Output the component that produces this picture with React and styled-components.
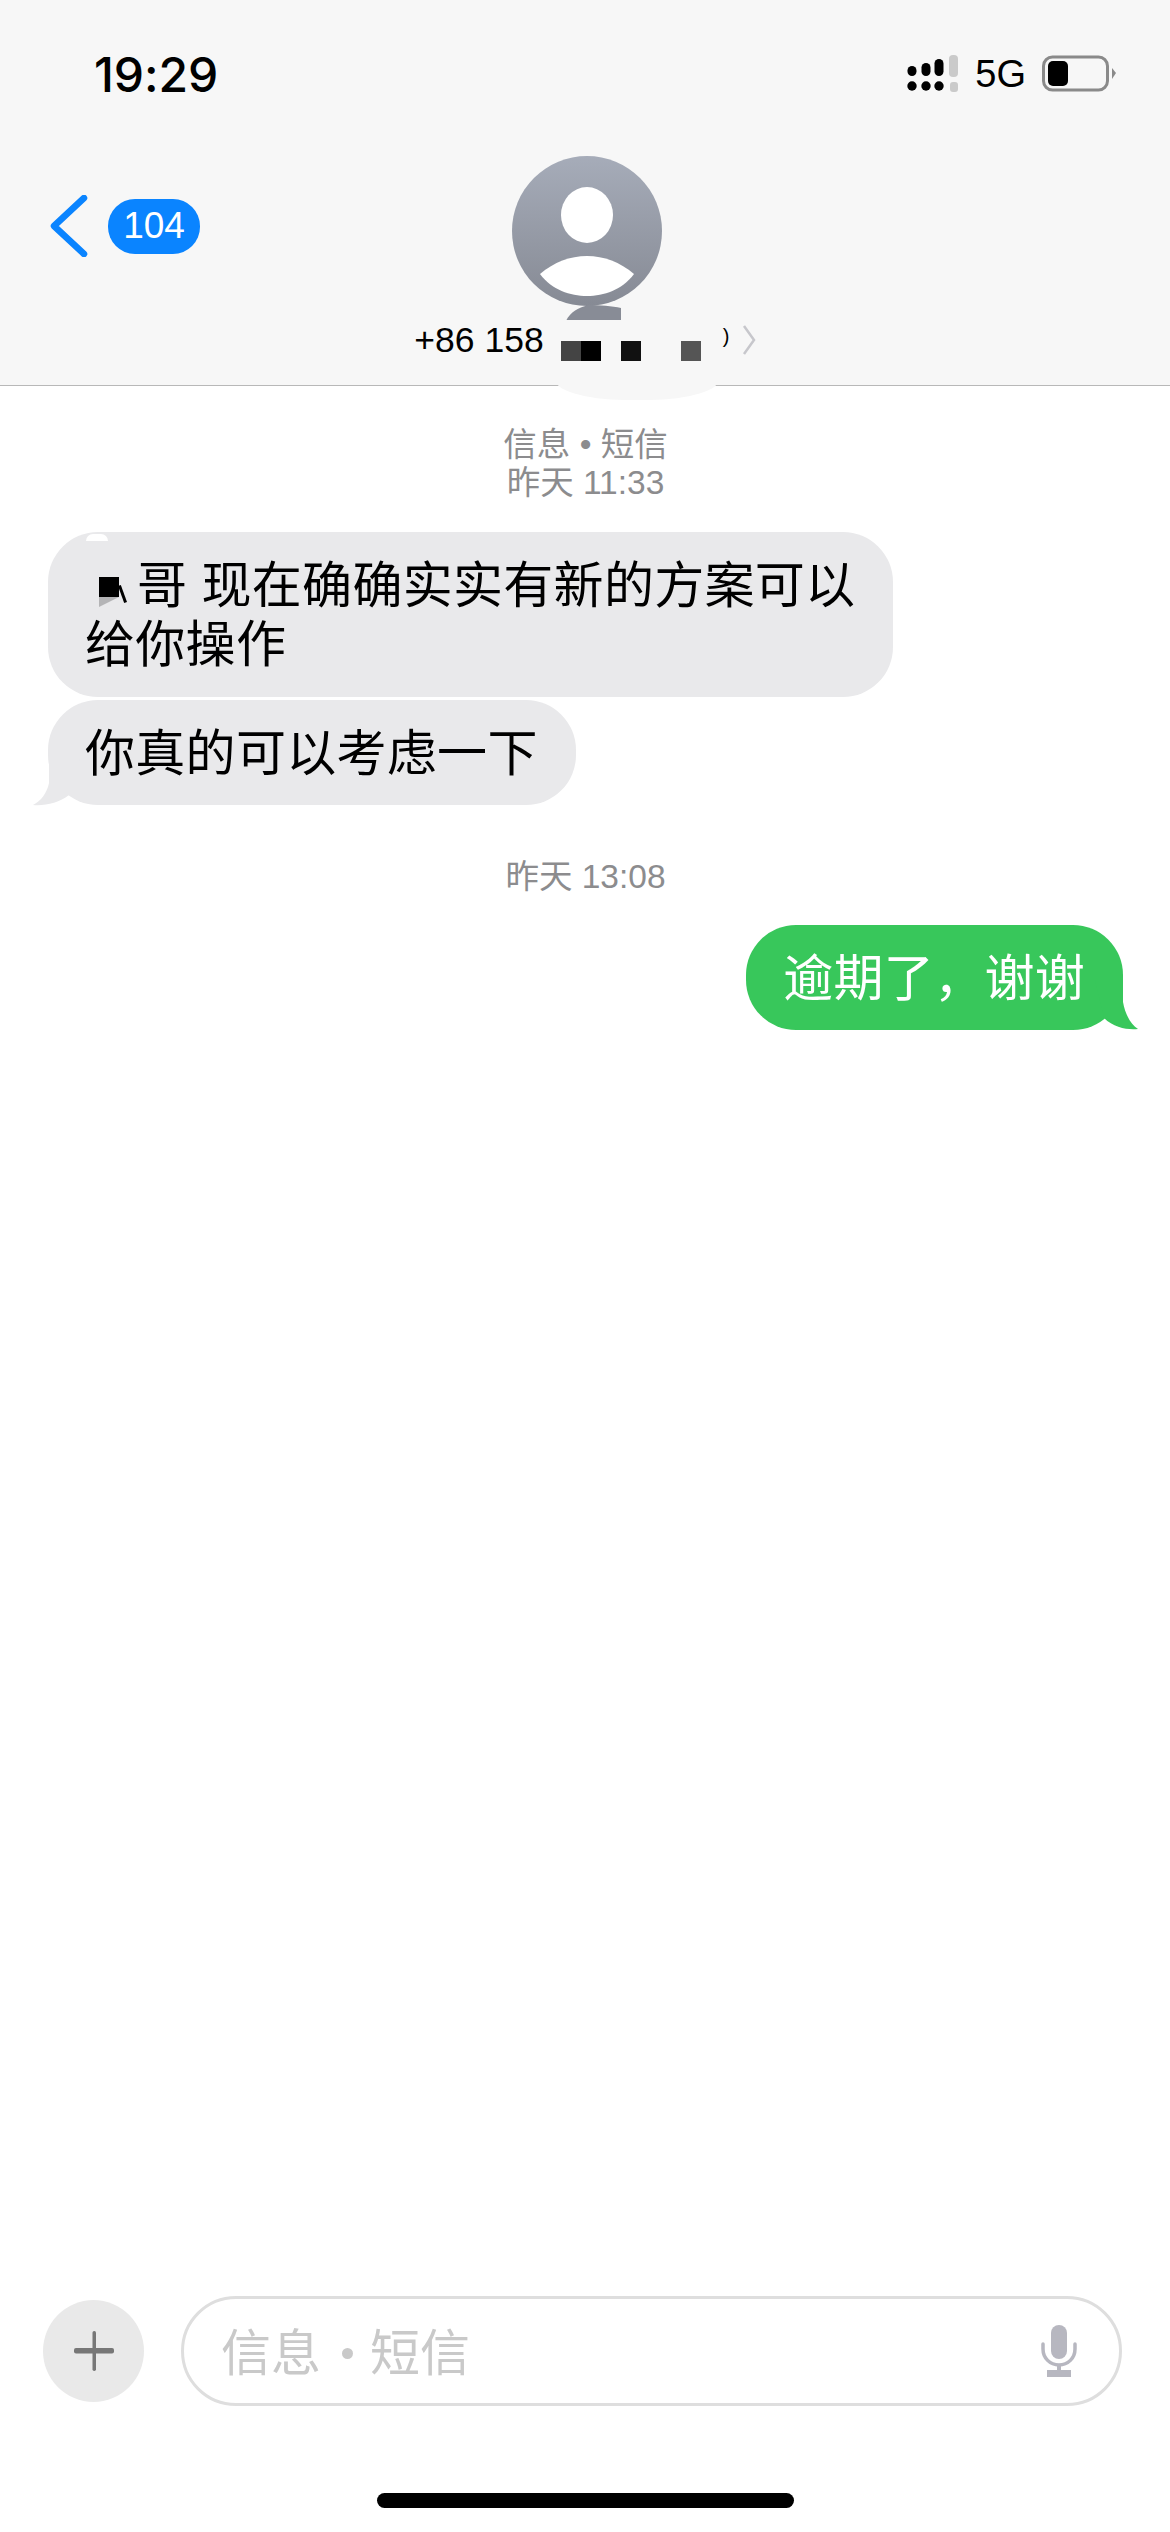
import React from "react";
import styled, { createGlobalStyle } from "styled-components";

const Global = createGlobalStyle`
  html, body { margin: 0; padding: 0; background: #fff; }
  * { box-sizing: border-box; }
`;
const CJK = `"Liberation Sans", "Noto Sans CJK SC", sans-serif`;

const Screen = styled.div`
  width: 1170px; height: 2532px; display: flex; flex-direction: column;
  background: #fff; font-family: ${CJK}; overflow: hidden; position: relative;
`;
const Header = styled.header`
  height: 386px; background: #f7f7f7; border-bottom: 1.5px solid #b8b8b8; position: relative; flex: none;
`;
const StatusBar = styled.div`
  height: 148px; display: flex; align-items: center; justify-content: space-between; padding: 0 54px 0 94px;
`;
const Clock = styled.div`
  font-family: Inter, sans-serif; font-size: 48px; font-weight: 500; color: #000; letter-spacing: -0.1px;
`;
const StatusIcons = styled.div`display: flex; align-items: center;`;
const Network = styled.span`
  font-size: 38px; color: #000; margin: 0 16px 0 16px; line-height: 1;
`;
const Nav = styled.div`display: grid; grid-template-columns: 1fr auto 1fr;`;
const Back = styled.div`
  display: flex; align-items: center; gap: 20px; padding-left: 50px; margin-top: 47px; height: 62px; align-self: start;
`;
const Badge = styled.div`
  width: 92px; height: 55px; border-radius: 27px; background: #0a84ff; color: #fff;
  display: flex; align-items: center; justify-content: center; font-size: 37px;
`;
const Center = styled.div`display: flex; flex-direction: column; align-items: center; padding-top: 8px;`;
const AvatarFrame = styled.div`margin-left: 3px;`;
const NameRow = styled.div`
  display: flex; align-items: center; height: 38px; position: relative; z-index: 2; font-size: 35.5px; color: #000;
`;
const Mask = styled.div`
  position: absolute; left: 554px; top: 320px; width: 166px; height: 80px; background: #f7f7f7;
  border-radius: 0 0 70px 70px / 0 0 22px 22px; z-index: 1;
`;
const Redacted = styled.div`
  width: 179px; height: 38px; display: flex; padding: 20px 0 0 17px; flex: none;
`;
const Square = styled.i`
  display: block; width: 20px; height: 20px; background: ${p => p.$c}; margin-left: ${p => p.$gap || 0}px;
`;
const Remnant = styled.span`
  width: 9px; font-size: 20px; line-height: 24px; align-self: flex-start; margin-top: 3px; flex: none; margin-right: 10px;
`;
const Messages = styled.main`
  display: flex; flex-direction: column; padding: 40px 47px 0 48px; flex: none;
`;
const Stamp = styled.div`
  text-align: center; color: #8c8c8e; font-size: 33.5px; line-height: 38px; margin: ${p => p.$top || 0}px 0 ${p => p.$bottom}px;
`;
const Bubble = styled.div`
  position: relative; width: fit-content; white-space: nowrap; font-size: 50px; line-height: 59px; letter-spacing: 0.3px;
  padding: 25px 38px 21px 37px; border-radius: 50px; flex: none;
  background: ${p => (p.$mine ? "#38c75b" : "#e9e9eb")};
  color: ${p => (p.$mine ? "#fff" : "#000")};
  margin-left: ${p => (p.$mine ? "auto" : "0")};
  margin-right: ${p => (p.$mine ? "0" : "auto")};
  margin-bottom: ${p => p.$after || 0}px;
  min-height: ${p => p.$tall || 105}px;
`;
const Tail = styled.svg`
  position: absolute; bottom: 0; ${p => (p.$right ? "right: -17px;" : "left: -17px;")} width: 40px; height: 30px; display: block; overflow: visible;
`;
const Glare = styled.i`
  position: absolute; left: 38px; top: 2px; width: 22px; height: 7px; background: #fff; border-radius: 14px 14px 0 0;
`;
const HiddenChar = styled.span`
  display: inline-block; position: relative; width: 52px; height: 40px; vertical-align: baseline;
`;
const HiddenTop = styled.i`
  position: absolute; left: 14px; top: 14px; width: 20px; height: 20px; background: #000;
`;
const HiddenShade = styled.i`
  position: absolute; left: 14px; top: 34px; width: 20px; height: 10px; background: #b4b4b6;
  clip-path: polygon(0 100%, 0 0, 100% 0);
`;
const Kick = styled.i`
  position: absolute; left: 36px; top: 22px; width: 3px; height: 18px; background: #000; transform: rotate(-20deg);
`;
const Footer = styled.footer`
  margin-top: auto; display: flex; flex-direction: column; align-items: center; padding-bottom: 24px;
`;
const Composer = styled.div`
  width: 100%; display: flex; align-items: center; gap: 37px; padding: 0 48px 0 43px;
`;
const PlusButton = styled.div`
  width: 101px; height: 102px; border-radius: 50%; background: #e9e9e9; flex: none;
  display: flex; align-items: center; justify-content: center;
`;
const Input = styled.div`
  flex: 1; height: 110px; border: 3px solid #dedede; border-radius: 55px;
  display: flex; align-items: center; justify-content: space-between; padding: 0 42px 0 37px;
`;
const Placeholder = styled.span`color: #c9c9c9; font-size: 50px; line-height: 1; white-space: nowrap; padding-top: 5px;`;
const Dot = styled.i`
  display: inline-block; width: 11px; height: 11px; border-radius: 50%; background: #c9c9c9; margin: 0 17px 0 21px; vertical-align: 12px;
`;
const HomeBar = styled.div`
  width: 417px; height: 15px; background: #000; border-radius: 8px; margin-top: 87px;
`;

const Signal = () => (
  <svg width="52" height="38" viewBox="0 0 52 38">
    <g fill="#000">
      <circle cx="5" cy="31" r="4.7" /><circle cx="19" cy="31" r="4.7" /><circle cx="32" cy="31" r="4.7" />
      <rect x="0.5" y="11" width="9" height="10" rx="4.5" />
      <rect x="14.5" y="8" width="9" height="13" rx="4.5" />
      <rect x="27.5" y="4" width="9" height="17" rx="4.5" />
    </g>
    <g fill="#cacaca">
      <rect x="42" y="0" width="9" height="22" rx="4" />
      <rect x="43" y="27" width="8" height="10" rx="3" />
    </g>
  </svg>
);
const Battery = () => (
  <svg width="74" height="38" viewBox="0 0 74 38">
    <rect x="1.5" y="2" width="64" height="33" rx="9" fill="none" stroke="#8a8a8a" strokeWidth="3" />
    <rect x="6" y="6" width="20" height="25" rx="5" fill="#000" />
    <path d="M70 13 L74 18 L70 24 Z" fill="#8a8a8a" />
  </svg>
);
const Chevron = () => (
  <svg width="38" height="62" viewBox="0 0 38 62">
    <path d="M34 3 L4 31 L34 59" fill="none" stroke="#0a84ff" strokeWidth="6.5" strokeLinecap="round" strokeLinejoin="round" />
  </svg>
);
const Avatar = () => (
  <svg width="150" height="165" viewBox="0 0 150 165" style={{ display: "block" }}>
    <defs>
      <linearGradient id="av" x1="0" y1="0" x2="0" y2="1">
        <stop offset="0" stopColor="#a6acb9" />
        <stop offset="1" stopColor="#868a94" />
      </linearGradient>
    </defs>
    <circle cx="75" cy="75" r="75" fill="url(#av)" />
    <ellipse cx="75" cy="59" rx="26" ry="28" fill="#fff" />
    <path d="M28 118 C42 106 58 100 75 100 C92 100 108 106 122 118 C110 134 92 140 75 140 C58 140 40 134 28 118 Z" fill="#fff" />
    <path d="M54 165 C58 156 66 152 76 149 C88 149 100 150 109 152 L109 165 Z" fill="#888c96" />
  </svg>
);
const NameChevron = () => (
  <svg width="14" height="32" viewBox="0 0 14 32" style={{ flex: "none" }}>
    <path d="M2 2 L12 16 L2 30" fill="none" stroke="#c7c7cc" strokeWidth="2.5" />
  </svg>
);
const Plus = () => (
  <svg width="40" height="40" viewBox="0 0 40 40">
    <rect x="18.5" y="0" width="3.5" height="40" rx="1.7" fill="#777" />
    <rect x="0" y="17" width="40" height="5.5" rx="2" fill="#777" />
  </svg>
);
const Mic = () => (
  <svg width="36" height="52" viewBox="0 0 36 52">
    <rect x="10" y="0" width="16" height="34" rx="8" fill="#b7b7c0" />
    <path d="M2 19 V24 C2 33 9 40 18 40 C27 40 34 33 34 24 V19" fill="none" stroke="#b7b7c0" strokeWidth="3.5" strokeLinecap="round" />
    <rect x="16" y="40" width="4" height="8" fill="#b7b7c0" />
    <rect x="6" y="45" width="24" height="7" fill="#b7b7c0" />
  </svg>
);

export default function App() {
  return (
    <Screen>
      <Global />
      <Header>
        <StatusBar>
          <Clock>19:29</Clock>
          <StatusIcons>
            <Signal />
            <Network>5G</Network>
            <Battery />
          </StatusIcons>
        </StatusBar>
        <Nav>
          <Back>
            <Chevron />
            <Badge>104</Badge>
          </Back>
          <Center>
            <AvatarFrame><Avatar /></AvatarFrame>
            <NameRow>
              +86 158
              <Redacted>
                <Square $c="#444" />
                <Square $c="#000" />
                <Square $c="#111" $gap={20} />
                <Square $c="#555" $gap={40} />
              </Redacted>
              <Remnant>)</Remnant>
              <NameChevron />
            </NameRow>
          </Center>
          <div />
        </Nav>
        <Mask />
      </Header>
      <Messages>
        <Stamp $bottom={30}>信息 • 短信<br />昨天 11:33</Stamp>
        <Bubble $after={3} $tall={165}>
          <Glare />
          <HiddenChar><HiddenTop /><HiddenShade /><Kick /></HiddenChar>哥 现在确确实实有新的方案可以<br />给你操作
        </Bubble>
        <Bubble>
          你真的可以考虑一下
          <Tail viewBox="0 0 40 30">
            <path d="M18 -20 L18 8 C16 18 10 26 2 30 C14 31 28 28 38 20 L50 -20 Z" fill="#e9e9eb" />
          </Tail>
        </Bubble>
        <Stamp $top={53} $bottom={29}>昨天 13:08</Stamp>
        <Bubble $mine>
          逾期了，谢谢
          <Tail $right viewBox="0 0 40 30">
            <path d="M23 -20 L23 2 C25 14 31 25 38 29 C28 30 14 28 4 18 L-5 -20 Z" fill="#38c75b" />
          </Tail>
        </Bubble>
      </Messages>
      <Footer>
        <Composer>
          <PlusButton><Plus /></PlusButton>
          <Input>
            <Placeholder>信息<Dot />短信</Placeholder>
            <Mic />
          </Input>
        </Composer>
        <HomeBar />
      </Footer>
    </Screen>
  );
}
